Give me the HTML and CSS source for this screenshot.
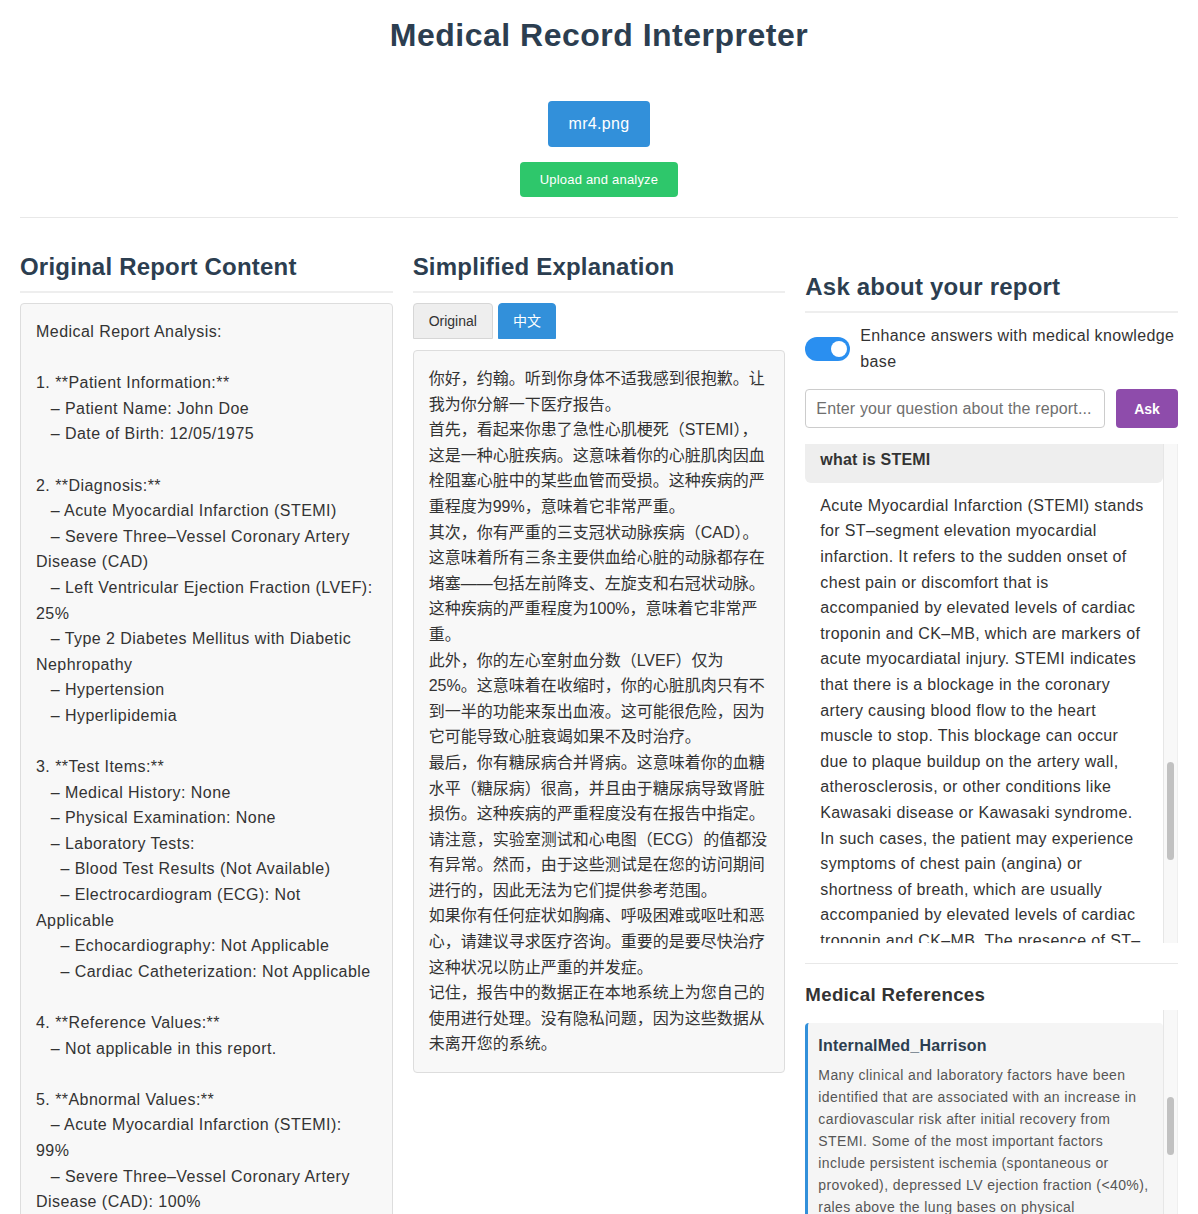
FILE: index.html
```html
<!DOCTYPE html>
<html lang="en">
<head>
<meta charset="utf-8">
<title>Medical Record Interpreter</title>
<link rel="stylesheet" href="styles.css">
</head>
<body>
<div class="app">
  <h1 class="title">Medical Record Interpreter</h1>
  <div class="upload">
    <label class="file-btn">mr4.png</label>
    <button class="upload-btn">Upload and analyze</button>
  </div>
  <div class="columns">
    <section class="col">
      <h2 class="col-title">Original Report Content</h2>
      <div class="report-box">Medical Report Analysis:

1. **Patient Information:**
   – Patient Name: John Doe
   – Date of Birth: 12/05/1975

2. **Diagnosis:**
   – Acute Myocardial Infarction (STEMI)
   – Severe Three–Vessel Coronary Artery Disease (CAD)
   – Left Ventricular Ejection Fraction (LVEF): 25%
   – Type 2 Diabetes Mellitus with Diabetic Nephropathy
   – Hypertension
   – Hyperlipidemia

3. **Test Items:**
   – Medical History: None
   – Physical Examination: None
   – Laboratory Tests:
     – Blood Test Results (Not Available)
     – Electrocardiogram (ECG): Not Applicable
     – Echocardiography: Not Applicable
     – Cardiac Catheterization: Not Applicable

4. **Reference Values:**
   – Not applicable in this report.

5. **Abnormal Values:**
   – Acute Myocardial Infarction (STEMI): 99%
   – Severe Three–Vessel Coronary Artery Disease (CAD): 100%</div>
    </section>

    <section class="col">
      <h2 class="col-title">Simplified Explanation</h2>
      <div class="tabs">
        <button class="tab">Original</button>
        <button class="tab tab-active">中文</button>
      </div>
      <div class="explain-box">
        <p>你好，约翰。听到你身体不适我感到很抱歉。让我为你分解一下医疗报告。</p>
        <p>首先，看起来你患了急性心肌梗死（STEMI），这是一种心脏疾病。这意味着你的心脏肌肉因血栓阻塞心脏中的某些血管而受损。这种疾病的严重程度为99%，意味着它非常严重。</p>
        <p>其次，你有严重的三支冠状动脉疾病（CAD）。这意味着所有三条主要供血给心脏的动脉都存在堵塞——包括左前降支、左旋支和右冠状动脉。这种疾病的严重程度为100%，意味着它非常严重。</p>
        <p>此外，你的左心室射血分数（LVEF）仅为25%。这意味着在收缩时，你的心脏肌肉只有不到一半的功能来泵出血液。这可能很危险，因为它可能导致心脏衰竭如果不及时治疗。</p>
        <p>最后，你有糖尿病合并肾病。这意味着你的血糖水平（糖尿病）很高，并且由于糖尿病导致肾脏损伤。这种疾病的严重程度没有在报告中指定。</p>
        <p>请注意，实验室测试和心电图（ECG）的值都没有异常。然而，由于这些测试是在您的访问期间进行的，因此无法为它们提供参考范围。</p>
        <p>如果你有任何症状如胸痛、呼吸困难或呕吐和恶心，请建议寻求医疗咨询。重要的是要尽快治疗这种状况以防止严重的并发症。</p>
        <p>记住，报告中的数据正在本地系统上为您自己的使用进行处理。没有隐私问题，因为这些数据从未离开您的系统。</p>
      </div>
    </section>

    <section class="col col-ask">
      <h2 class="col-title">Ask about your report</h2>
      <div class="toggle-row">
        <span class="switch"><span class="knob"></span></span>
        <span class="toggle-label">Enhance answers with medical knowledge base</span>
      </div>
      <div class="ask-row">
        <input class="ask-input" type="text" placeholder="Enter your question about the report...">
        <button class="ask-btn">Ask</button>
      </div>
      <div class="chat-wrap">
        <div class="chat" id="chat">
          <div class="msg-q">what is STEMI</div>
          <div class="msg-a">Acute Myocardial Infarction (STEMI) stands for ST–segment elevation myocardial infarction. It refers to the sudden onset of chest pain or discomfort that is accompanied by elevated levels of cardiac troponin and CK–MB, which are markers of acute myocardiatal injury. STEMI indicates that there is a blockage in the coronary artery causing blood flow to the heart muscle to stop. This blockage can occur due to plaque buildup on the artery wall, atherosclerosis, or other conditions like Kawasaki disease or Kawasaki syndrome. In such cases, the patient may experience symptoms of chest pain (angina) or shortness of breath, which are usually accompanied by elevated levels of cardiac troponin and CK–MB. The presence of ST–segment elevation confirms it.</div>
        </div>
        <div class="scroll-track"><div class="scroll-thumb chat-thumb"></div></div>
      </div>
      <div class="refs-section">
        <h3 class="refs-title">Medical References</h3>
        <div class="refs-wrap">
          <div class="refs">
            <div class="ref-card">
              <div class="ref-name">InternalMed_Harrison</div>
              <div class="ref-text">Many clinical and laboratory factors have been identified that are associated with an increase in cardiovascular risk after initial recovery from STEMI. Some of the most important factors include persistent ischemia (spontaneous or provoked), depressed LV ejection fraction (&lt;40%), rales above the lung bases on physical examination.</div>
            </div>
          </div>
          <div class="scroll-track"><div class="scroll-thumb refs-thumb"></div></div>
        </div>
      </div>
    </section>
  </div>
</div>
<script src="script.js"></script>
</body>
</html>
```

FILE: styles.css
```css
html::-webkit-scrollbar { display: none; }

body {
  margin: 0;
  background: #ffffff;
  color: #333333;
  font-family: "Liberation Sans", "Noto Sans CJK SC", sans-serif;
  font-size: 16px;
}

.app {
  padding: 0 20px;
}

.title {
  margin: 17px 0 0;
  font-size: 32px;
  line-height: 37px;
  font-weight: 700;
  letter-spacing: 0.5px;
  text-align: center;
  color: #2c3e50;
}

.upload {
  margin-top: 47px;
  display: flex;
  flex-direction: column;
  align-items: center;
  gap: 15px;
  padding-bottom: 20px;
  border-bottom: 1px solid #e8e8e8;
}

.file-btn {
  display: inline-block;
  background: #3290da;
  color: #ffffff;
  font-size: 16px;
  line-height: 22px;
  letter-spacing: 0.3px;
  padding: 12px 21px;
  border-radius: 4px;
}

.upload-btn {
  font-family: inherit;
  background: #2ec76b;
  color: #ffffff;
  border: 0;
  border-radius: 4px;
  font-size: 13px;
  line-height: 15px;
  letter-spacing: 0.2px;
  padding: 10px 20px;
}

.columns {
  display: grid;
  grid-template-columns: repeat(3, 1fr);
  gap: 20px;
  margin-top: 35px;
  align-items: start;
}

.col {
  min-width: 0;
}

.col-ask {
  padding-top: 20px;
}

.col-title {
  margin: 0 0 10px;
  font-size: 24px;
  line-height: 28px;
  font-weight: 700;
  letter-spacing: 0.2px;
  color: #2c3e50;
  padding-bottom: 10px;
  border-bottom: 2px solid #eeeeee;
}

.report-box {
  background: #f8f8f8;
  border: 1px solid #dddddd;
  border-radius: 4px;
  padding: 15px;
  white-space: pre-wrap;
  line-height: 25.6px;
  letter-spacing: 0.45px;
  color: #333333;
}

.tabs {
  display: flex;
  gap: 5px;
  margin-bottom: 11px;
}

.tab {
  font-family: inherit;
  font-size: 14px;
  line-height: 16px;
  padding: 9px 15px;
  background: #eeeeee;
  color: #333333;
  border: 1px solid #d6d6d6;
  border-radius: 4px 4px 0 0;
}

.tab-active {
  background: #3290da;
  border-color: #3290da;
  color: #ffffff;
  padding: 9px 14px;
}

.explain-box {
  background: #f8f8f8;
  border: 1px solid #dddddd;
  border-radius: 4px;
  padding: 15px;
  line-height: 25.6px;
  color: #333333;
  font-family: "Liberation Sans", "Noto Sans CJK SC", sans-serif;
}

.explain-box p {
  margin: 0;
}

.toggle-row {
  display: flex;
  align-items: center;
  gap: 10px;
}

.switch {
  position: relative;
  flex: 0 0 45px;
  height: 24px;
  border-radius: 12px;
  background: #2a8ff0;
}

.knob {
  position: absolute;
  top: 4px;
  right: 3px;
  width: 16px;
  height: 16px;
  border-radius: 50%;
  background: #ffffff;
}

.toggle-label {
  line-height: 25.6px;
  letter-spacing: 0.35px;
  color: #333333;
}

.ask-row {
  display: flex;
  gap: 11px;
  margin-top: 15px;
}

.ask-input {
  flex: 1;
  min-width: 0;
  height: 39px;
  box-sizing: border-box;
  border: 1px solid #cccccc;
  border-radius: 4px;
  padding: 0 10px;
  font-family: inherit;
  font-size: 16px;
  letter-spacing: 0.15px;
  color: #333333;
}

.ask-input::placeholder {
  color: #6f6f6f;
}

.ask-btn {
  flex: 0 0 62px;
  height: 39px;
  border: 0;
  border-radius: 4px;
  background: #8e4cab;
  color: #ffffff;
  font-family: inherit;
  font-size: 14px;
  font-weight: 700;
}

.chat-wrap {
  display: flex;
  margin-top: 16px;
  height: 499px;
}

.chat {
  flex: 1;
  min-width: 0;
  overflow: hidden;
}

.scroll-track {
  flex: 0 0 15px;
  box-sizing: border-box;
  background: #f8f8f8;
  border-left: 1px solid #e6e6e6;
  border-right: 1px solid #efefef;
  padding: 0 3px;
}

.scroll-thumb {
  background: #c1c1c1;
  border-radius: 4px;
}

.chat-thumb {
  margin-top: 318px;
  height: 98px;
}

.refs-thumb {
  margin-top: 87px;
  height: 58px;
}

.msg-q {
  background: #eeeeee;
  border-radius: 6px;
  padding: 10px 15px;
  font-weight: 700;
  line-height: 25.6px;
  letter-spacing: 0.2px;
  color: #333333;
}

.msg-a {
  padding: 10px 15px 20px;
  line-height: 25.6px;
  letter-spacing: 0.35px;
  color: #333333;
}

.refs-section {
  margin-top: 20px;
  border-top: 1px solid #e8e8e8;
  padding-top: 20px;
}

.refs-title {
  margin: 0 0 4px;
  font-size: 18.7px;
  line-height: 22px;
  font-weight: 700;
  letter-spacing: 0.3px;
  color: #333333;
}

.refs-wrap {
  display: flex;
  height: 230px;
}

.refs {
  flex: 1;
  min-width: 0;
  overflow: hidden;
  padding-top: 13px;
}

.ref-card {
  background: #f5f5f5;
  border-left: 3px solid #3290da;
  border-radius: 4px;
  padding: 12px 12px 12px 10px;
}

.ref-name {
  font-weight: 700;
  line-height: 21px;
  color: #2c3e50;
  letter-spacing: 0.2px;
}

.ref-text {
  margin-top: 8px;
  font-size: 14px;
  line-height: 22px;
  letter-spacing: 0.4px;
  color: #555555;
}
```

FILE: script.js
```js
(function () {
  var chat = document.getElementById('chat');
  if (chat) {
    chat.scrollTop = 7;
  }
})();
```
